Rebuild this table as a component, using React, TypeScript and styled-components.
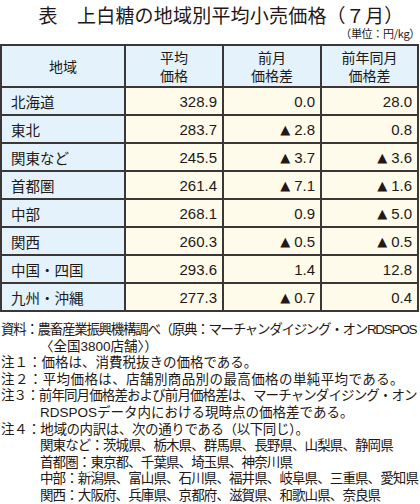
import styled, { createGlobalStyle } from "styled-components";

const GlobalStyle = createGlobalStyle`
  body {
    margin: 0;
    background: #ffffff;
    font-family: "Liberation Sans", "Noto Sans CJK JP", sans-serif;
    color: #231815;
  }
`;

const Page = styled.div`
  width: 420px;
  height: 504px;
  overflow: hidden;
  display: flex;
  flex-direction: column;
`;

const Title = styled.h1`
  margin: 0;
  padding: 3px 0 0 22px;
  height: 24px;
  font-family: "Noto Sans CJK JP", sans-serif;
  font-weight: 400;
  font-size: 19px;
  line-height: 24px;
  letter-spacing: 0.2px;
  text-align: center;
`;

const Unit = styled.div`
  height: 14px;
  font-family: "Noto Sans CJK JP", sans-serif;
  font-size: 11px;
  line-height: 12px;
  text-align: right;
  letter-spacing: -0.3px;
  margin-bottom: 3px;
`;

const Grid = styled.div`
  display: grid;
  grid-template-columns: 122px 96px 96px 95px;
  grid-template-rows: 40px repeat(8, 26px);
  gap: 2px;
  padding: 2px;
  width: 419px;
  box-sizing: border-box;
  background: #3b3737;
`;

const HeadCell = styled.div`
  background: #e4f2fb;
  display: flex;
  align-items: center;
  justify-content: center;
  text-align: center;
  font-family: "Noto Sans CJK JP", sans-serif;
  font-size: 14px;
  line-height: 18px;
`;

const AreaCell = styled.div`
  background: #e4f2fb;
  display: flex;
  align-items: center;
  padding-left: 9px;
  font-family: "Noto Sans CJK JP", sans-serif;
  font-size: 14.5px;
`;

const NumCell = styled.div`
  background: #fefbea;
  display: flex;
  align-items: center;
  justify-content: flex-end;
  gap: 4px;
  padding-right: 5px;
  font-size: 15px;
`;

const Minus = styled.span`
  font-family: "DejaVu Sans", sans-serif;
  font-size: 13px;
`;

const Notes = styled.div`
  margin-top: 8px;
  font-family: "Noto Sans CJK JP", sans-serif;
  font-size: 13.5px;
  white-space: nowrap;
`;

const Line = styled.div<{ $indent?: boolean; $spacing?: number }>`
  height: 16.6px;
  line-height: 16.6px;
  padding-left: ${(p) => (p.$indent ? "40px" : "1px")};
  letter-spacing: ${(p) => `${p.$spacing ?? 0}px`};
`;

const Latin = styled.span`
  font-family: "Liberation Sans", sans-serif;
  line-height: 1;
`;

type Row = { area: string; avg: string; mom: string; yoy: string };

const rows: Row[] = [
  { area: "北海道", avg: "328.9", mom: "0.0", yoy: "28.0" },
  { area: "東北", avg: "283.7", mom: "-2.8", yoy: "0.8" },
  { area: "関東など", avg: "245.5", mom: "-3.7", yoy: "-3.6" },
  { area: "首都圏", avg: "261.4", mom: "-7.1", yoy: "-1.6" },
  { area: "中部", avg: "268.1", mom: "0.9", yoy: "-5.0" },
  { area: "関西", avg: "260.3", mom: "-0.5", yoy: "-0.5" },
  { area: "中国・四国", avg: "293.6", mom: "1.4", yoy: "12.8" },
  { area: "九州・沖縄", avg: "277.3", mom: "-0.7", yoy: "0.4" },
];

const Value = ({ v }: { v: string }) =>
  v.startsWith("-") ? (
    <NumCell>
      <Minus>▲</Minus>
      {v.slice(1)}
    </NumCell>
  ) : (
    <NumCell>{v}</NumCell>
  );

const App = () => {
  return (
    <Page>
      <GlobalStyle />
      <Title>表　上白糖の地域別平均小売価格（７月）</Title>
      <Unit>（単位：円/kg）</Unit>
      <Grid>
        <HeadCell>地域</HeadCell>
        <HeadCell>
          平均
          <br />
          価格
        </HeadCell>
        <HeadCell>
          前月
          <br />
          価格差
        </HeadCell>
        <HeadCell>
          前年同月
          <br />
          価格差
        </HeadCell>
        {rows.map((r) => (
          <>
            <AreaCell key={r.area}>{r.area}</AreaCell>
            <Value v={r.avg} />
            <Value v={r.mom} />
            <Value v={r.yoy} />
          </>
        ))}
      </Grid>
      <Notes>
        <Line $spacing={-1.3}>
          資料：農畜産業振興機構調べ（原典：マーチャンダイジング・オン
          <Latin>RDSPOS</Latin>
        </Line>
        <Line $indent>
          〈全国<Latin>3800</Latin>店舗〉）
        </Line>
        <Line>注１：価格は、消費税抜きの価格である。</Line>
        <Line $spacing={0.4}>
          注２：平均価格は、店舗別商品別の最高価格の単純平均である。
        </Line>
        <Line $spacing={-0.9}>
          注３：前年同月価格差および前月価格差は、マーチャンダイジング・オン
        </Line>
        <Line $indent>
          <Latin>RDSPOS</Latin>データ内における現時点の価格差である。
        </Line>
        <Line $spacing={-0.4}>
          注４：地域の内訳は、次の通りである（以下同じ）。
        </Line>
        <Line $indent $spacing={-0.9}>
          関東など：茨城県、栃木県、群馬県、長野県、山梨県、静岡県
        </Line>
        <Line $indent $spacing={-0.9}>
          首都圏：東京都、千葉県、埼玉県、神奈川県
        </Line>
        <Line $indent $spacing={-0.9}>
          中部：新潟県、富山県、石川県、福井県、岐阜県、三重県、愛知県
        </Line>
        <Line $indent $spacing={-0.9}>
          関西：大阪府、兵庫県、京都府、滋賀県、和歌山県、奈良県
        </Line>
      </Notes>
    </Page>
  );
};

export default App;
